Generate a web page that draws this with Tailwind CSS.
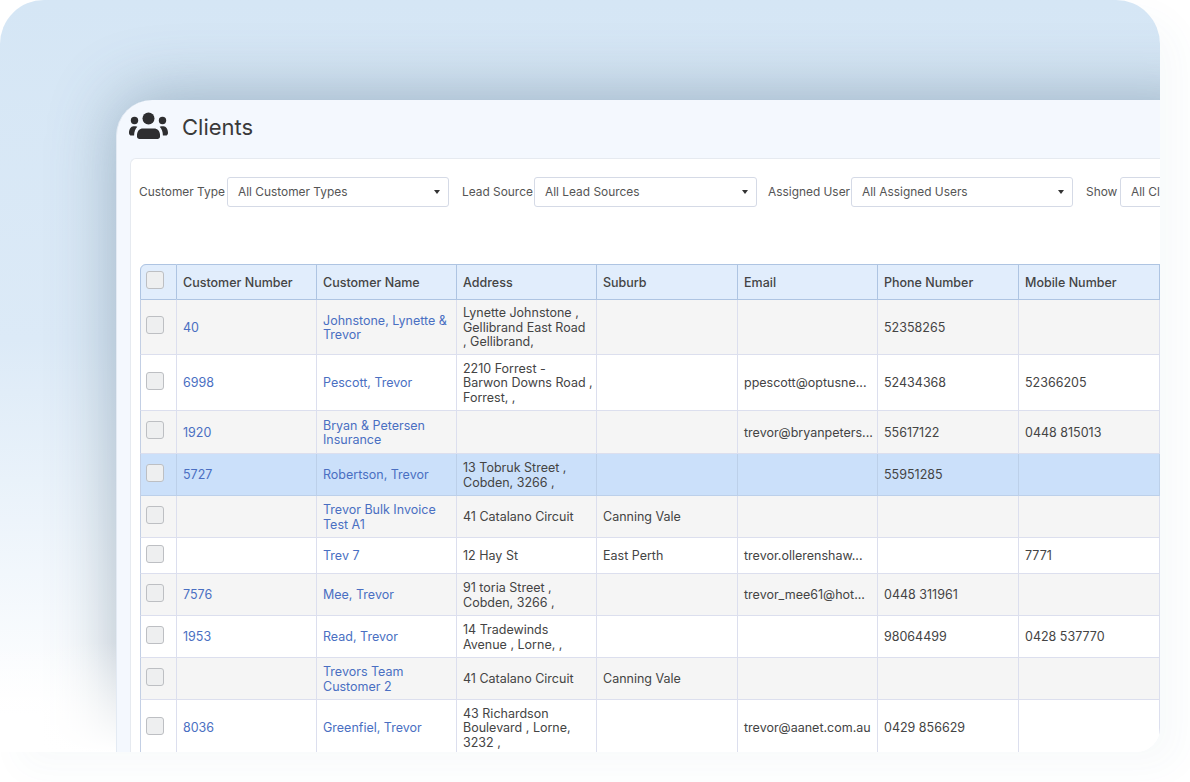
<!DOCTYPE html>
<html lang="en">
<head>
<meta charset="UTF-8">
<title>Clients</title>
<script src="https://cdn.jsdelivr.net/npm/@tailwindcss/browser@4"></script>
</head>
<body class="bg-white font-['Inter','Liberation_Sans',sans-serif]">
<div class="relative w-[1190px] h-[782px] overflow-hidden bg-white">
  <!-- backdrop panel -->
  <div class="relative w-[1160px] h-[752px] overflow-hidden rounded-t-[44px] rounded-br-[24px] bg-gradient-to-b from-[#d5e6f5] via-[#dceaf7] via-45% to-white to-95% pt-[100px] pl-[116px] shadow-[20px_16px_36px_rgba(70,105,135,0.035)]">
    <!-- app window -->
    <div class="w-[1100px] h-[700px] rounded-tl-[36px] bg-[#f4f8fe] border-l border-[#e3eaf3] shadow-[0_-4px_66px_rgba(70,100,125,0.42)]">
      <div class="flex items-center h-[54px] mb-[4px] pl-[12px] gap-[13px]">
        <svg class="w-[40px] h-[30px] -mt-[3px] text-[#2e2e30]" viewBox="0 0 40 30" fill="currentColor">
          <circle cx="19.5" cy="7.5" r="6"/>
          <circle cx="5.5" cy="9.5" r="3.7"/>
          <circle cx="33.5" cy="9.5" r="3.7"/>
          <path d="M8 24c0-3.8 2.5-6.5 6-6.5h11c3.5 0 6 2.7 6 6.5v1.5c0 1.5-1 2.5-2.5 2.5h-18C9 28 8 27 8 25.5z"/>
          <path d="M4.5 15.2h2c.8 0 1.3.2 1.8.5C6.2 17.6 5.2 20.6 5.1 24.6H2.4C.9 24.6 0 23.4 0 22c0-3.8 1.9-6.8 4.5-6.8z"/>
          <path d="M34.5 15.2h-2c-.8 0-1.3.2-1.8.5 2.1 1.9 3.1 4.9 3.2 8.9h2.7c1.5 0 2.4-1.2 2.4-2.6 0-3.8-1.9-6.8-4.5-6.8z"/>
        </svg>
        <h1 class="text-[22px] leading-none font-normal text-[#3a3a3a]">Clients</h1>
      </div>
      <!-- content card -->
      <div class="ml-[13px] h-[640px] rounded-tl-md bg-white border-t border-l border-[#e6eaf0] pl-[9px] pt-[18px]">
        <div class="flex items-center -ml-[1px] h-[30px] text-[11.9px] text-[#555] whitespace-nowrap">
          <span class="w-[88px] shrink-0">Customer Type</span>
          <div class="flex items-center justify-between shrink-0 w-[222px] h-[30px] pl-[10px] pr-[8px] bg-white border border-[#d5dae6] rounded-[3px] text-[#555]"><span>All Customer Types</span><span class="border-x-[3px] border-x-transparent border-t-[4px] border-t-[#333]"></span></div>
          <span class="ml-[13px] w-[72px] shrink-0">Lead Source</span>
          <div class="flex items-center justify-between shrink-0 w-[223px] h-[30px] pl-[10px] pr-[8px] bg-white border border-[#d5dae6] rounded-[3px] text-[#555]"><span>All Lead Sources</span><span class="border-x-[3px] border-x-transparent border-t-[4px] border-t-[#333]"></span></div>
          <span class="ml-[11px] w-[83px] shrink-0">Assigned User</span>
          <div class="flex items-center justify-between shrink-0 w-[222px] h-[30px] pl-[10px] pr-[8px] bg-white border border-[#d5dae6] rounded-[3px] text-[#555]"><span>All Assigned Users</span><span class="border-x-[3px] border-x-transparent border-t-[4px] border-t-[#333]"></span></div>
          <span class="ml-[13px] w-[34px] shrink-0">Show</span>
          <div class="flex items-center shrink-0 w-[222px] h-[30px] px-[10px] bg-white border border-[#d5dae6] rounded-[3px] text-[#555]"><span>All Clients</span></div>
        </div>
        <!-- clients table -->
        <table class="mt-[57px] w-[1020px] table-fixed border-separate border-spacing-0 text-[12.5px] leading-[14.5px] text-[#444]">
          <colgroup>
            <col class="w-[37px]"><col class="w-[140px]"><col class="w-[140px]"><col class="w-[140px]"><col class="w-[141px]"><col class="w-[140px]"><col class="w-[141px]"><col class="w-[141px]">
          </colgroup>
          <thead>
            <tr class="h-[36px] bg-[#e1edfc] text-left text-[#444] [&>th]:font-medium [&>th]:pl-[6px] [&>th]:pt-[2px] [&>th]:border-r [&>th]:border-y [&>th]:border-[#aec4e2]">
              <th class="border-l rounded-tl-[6px] !pl-[5px] !pt-0"><span class="block w-[18px] h-[18px] mb-[4px] rounded-[3px] border border-[#bdbfc3] bg-[#eeeff0]"></span></th>
              <th>Customer Number</th><th>Customer Name</th><th>Address</th><th>Suburb</th><th>Email</th><th>Phone Number</th><th>Mobile Number</th>
            </tr>
          </thead>
          <tbody class="[&_td]:pl-[6px] [&_td]:pr-[2px] [&_td]:pt-[2px] [&_td]:border-r [&_td]:border-b [&_td]:border-[#dcdfee] [&_td:first-child]:border-l [&_td:first-child]:border-l-[#c3cfe4] [&_td:first-child]:pl-[5px] [&_td:first-child]:pt-0 [&_a]:text-[#4a6fc2]">
            <tr class="h-[55px] bg-[#f5f5f5]">
              <td><span class="block w-[18px] h-[18px] mb-[4px] rounded-[3px] border border-[#bdbfc3] bg-[#eeeff0]"></span></td>
              <td><a>40</a></td><td><a>Johnstone, Lynette &amp; Trevor</a></td><td>Lynette Johnstone ,<br>Gellibrand East Road<br>, Gellibrand,</td><td></td><td></td><td>52358265</td><td></td>
            </tr>
            <tr class="h-[56px] bg-white">
              <td><span class="block w-[18px] h-[18px] mb-[4px] rounded-[3px] border border-[#bdbfc3] bg-[#eeeff0]"></span></td>
              <td><a>6998</a></td><td><a>Pescott, Trevor</a></td><td>2210 Forrest -<br>Barwon Downs Road ,<br>Forrest, ,</td><td></td><td class="truncate">ppescott@optusne...</td><td>52434368</td><td>52366205</td>
            </tr>
            <tr class="h-[43px] bg-[#f5f5f5]">
              <td><span class="block w-[18px] h-[18px] mb-[4px] rounded-[3px] border border-[#bdbfc3] bg-[#eeeff0]"></span></td>
              <td><a>1920</a></td><td><a>Bryan &amp; Petersen Insurance</a></td><td></td><td></td><td class="truncate">trevor@bryanpeters...</td><td>55617122</td><td>0448 815013</td>
            </tr>
            <tr class="h-[42px] bg-[#cbe0fa] [&>td]:border-[#bcd0ea]">
              <td><span class="block w-[18px] h-[18px] mb-[4px] rounded-[3px] border border-[#bdbfc3] bg-[#eeeff0]"></span></td>
              <td><a>5727</a></td><td><a>Robertson, Trevor</a></td><td>13 Tobruk Street ,<br>Cobden, 3266 ,</td><td></td><td></td><td>55951285</td><td></td>
            </tr>
            <tr class="h-[42px] bg-[#f5f5f5]">
              <td><span class="block w-[18px] h-[18px] mb-[4px] rounded-[3px] border border-[#bdbfc3] bg-[#eeeff0]"></span></td>
              <td></td><td><a>Trevor Bulk Invoice Test A1</a></td><td>41 Catalano Circuit</td><td>Canning Vale</td><td></td><td></td><td></td>
            </tr>
            <tr class="h-[36px] bg-white">
              <td><span class="block w-[18px] h-[18px] mb-[4px] rounded-[3px] border border-[#bdbfc3] bg-[#eeeff0]"></span></td>
              <td></td><td><a>Trev 7</a></td><td>12 Hay St</td><td>East Perth</td><td class="truncate">trevor.ollerenshaw...</td><td></td><td>7771</td>
            </tr>
            <tr class="h-[42px] bg-[#f5f5f5]">
              <td><span class="block w-[18px] h-[18px] mb-[4px] rounded-[3px] border border-[#bdbfc3] bg-[#eeeff0]"></span></td>
              <td><a>7576</a></td><td><a>Mee, Trevor</a></td><td>91 toria Street ,<br>Cobden, 3266 ,</td><td></td><td class="truncate">trevor_mee61@hot...</td><td>0448 311961</td><td></td>
            </tr>
            <tr class="h-[42px] bg-white">
              <td><span class="block w-[18px] h-[18px] mb-[4px] rounded-[3px] border border-[#bdbfc3] bg-[#eeeff0]"></span></td>
              <td><a>1953</a></td><td><a>Read, Trevor</a></td><td>14 Tradewinds<br>Avenue , Lorne, ,</td><td></td><td></td><td>98064499</td><td>0428 537770</td>
            </tr>
            <tr class="h-[42px] bg-[#f5f5f5]">
              <td><span class="block w-[18px] h-[18px] mb-[4px] rounded-[3px] border border-[#bdbfc3] bg-[#eeeff0]"></span></td>
              <td></td><td><a>Trevors Team Customer 2</a></td><td>41 Catalano Circuit</td><td>Canning Vale</td><td></td><td></td><td></td>
            </tr>
            <tr class="h-[56px] bg-white">
              <td><span class="block w-[18px] h-[18px] mb-[4px] rounded-[3px] border border-[#bdbfc3] bg-[#eeeff0]"></span></td>
              <td><a>8036</a></td><td><a>Greenfiel, Trevor</a></td><td>43 Richardson<br>Boulevard , Lorne,<br>3232 ,</td><td></td><td class="truncate">trevor@aanet.com.au</td><td>0429 856629</td><td></td>
            </tr>
          </tbody>
        </table>
      </div>
    </div>
    <!-- fade over the lower left of the backdrop -->
    <div class="absolute left-0 bottom-0 w-[116px] h-[110px] bg-gradient-to-b from-transparent to-white"></div>
  </div>
</div>
</body>
</html>
